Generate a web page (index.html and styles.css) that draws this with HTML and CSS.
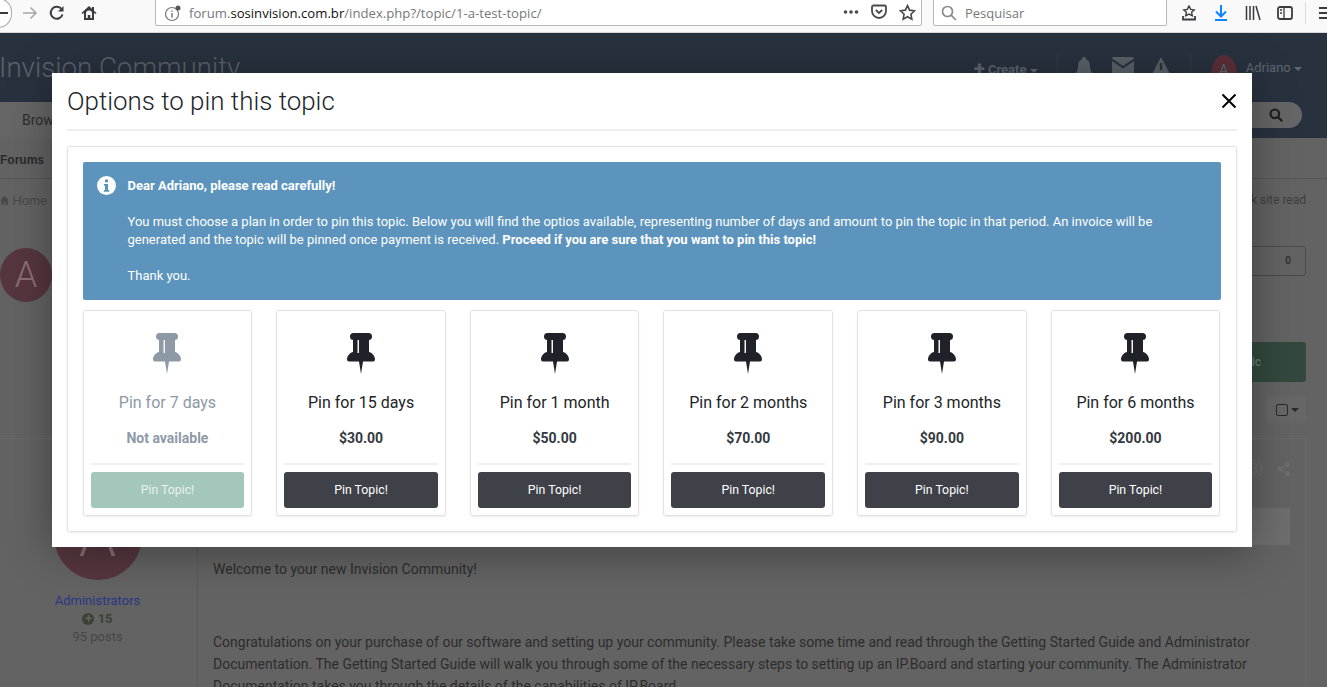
FILE: index.html
```html
<!DOCTYPE html>
<html lang="pt-BR">
<head>
<meta charset="UTF-8">
<title>Options to pin this topic</title>
<link rel="stylesheet" href="styles.css">
</head>
<body>

<header class="toolbar">
    <div class="nav-btns">
        <span class="back-circle"><svg width="10" height="10" viewBox="0 0 10 10"><path d="M1 5h9" stroke="#3b3b3d" stroke-width="2" /></svg></span>
        <svg class="ic-fwd" width="16" height="16" viewBox="0 0 16 16" fill="none" stroke="#a8a8aa" stroke-width="1.6"><path d="M1 8h13M8.5 2.5 14 8l-5.500 5.500" /></svg>
        <svg class="ic-reload" width="16" height="16" viewBox="0 0 16 16" fill="none" stroke="#3b3b3d" stroke-width="2"><path d="M13.500 9.500A6 6 0 1 1 12 3.500" /><path d="M14.500 1v5.500H9" fill="#3b3b3d" stroke="none" /></svg>
        <svg class="ic-home" width="16" height="16" viewBox="0 0 16 16"><path d="M8 1 0.500 8l1 1L3 7.800V15h10V7.800L14.500 9l1-1L13 5.700V2h-2v1.800z" fill="#3b3b3d" /><path d="M5 8.500a3 3 0 0 1 6 0V13H9.300V10H6.700v3H5z" fill="#f9f9fa" /></svg>
    </div>
    <div class="urlbar">
        <svg class="ic-info" width="18" height="18" viewBox="0 0 18 18" fill="none"><circle cx="8" cy="10" r="6.500" stroke="#77777a" stroke-width="1.200" /><path d="M8 9v4.500M8 6.500v1.200" stroke="#77777a" stroke-width="1.500" /><circle cx="14" cy="4" r="2.500" fill="#555" /></svg>
        <span class="url"><span class="url-dim">forum.</span>sosinvision.com.br<span class="url-dim">/index.php?/topic/1-a-test-topic/</span></span>
        <span class="url-tools">
            <svg width="16" height="16" viewBox="0 0 16 16" fill="#4a4a4d"><circle cx="2.500" cy="8" r="1.800" /><circle cx="8" cy="8" r="1.800" /><circle cx="13.500" cy="8" r="1.800" /></svg>
            <svg width="16" height="16" viewBox="0 0 16 16" fill="none" stroke="#4a4a4d" stroke-width="1.800"><path d="M2.500 1.500h11a1.500 1.500 0 0 1 1.500 1.500v4a7 7 0 0 1-14 0V3a1.500 1.500 0 0 1 1-1.500z" /><path d="M4.800 6 8 9l3.200-3" /></svg>
            <svg width="17" height="17" viewBox="0 0 16 16" fill="none" stroke="#4a4a4d" stroke-width="1.500"><path d="M8 1.500l2 4.300 4.600.6-3.400 3.200.9 4.700L8 12l-4.100 2.300.9-4.700L1.400 6.400 6 5.800z" /></svg>
        </span>
    </div>
    <div class="searchbar">
        <svg width="16" height="16" viewBox="0 0 16 16" fill="none" stroke="#8a8a8c" stroke-width="1.700"><circle cx="6.500" cy="6.500" r="5" /><path d="M10.300 10.300 15 15" /></svg>
        <span>Pesquisar</span>
    </div>
    <div class="tool-icons">
        <svg width="16" height="16" viewBox="0 0 16 16" fill="none" stroke="#3b3b3d" stroke-width="1.400"><path d="M8 1l1.700 3.400 3.500.5-2.600 2.400.7 3.500L8 9.100l-3.300 1.700.7-3.500L2.800 4.900l3.500-.5z" /><path d="M2 11v3.500h12V11" stroke-width="1.800" /></svg>
        <svg width="16" height="16" viewBox="0 0 16 16" fill="none" stroke="#0a84ff" stroke-width="2"><path d="M8 0v10.500M3 6.500l5 5 5-5M2 15h12" /></svg>
        <svg width="16" height="16" viewBox="0 0 16 16" fill="none" stroke="#3b3b3d" stroke-width="1.500"><path d="M1.500 1v14M5 1v14M8.500 1v14M11 1l4 14" /></svg>
        <svg width="16" height="16" viewBox="0 0 16 16" fill="none" stroke="#3b3b3d" stroke-width="1.800"><rect x="1" y="2" width="14" height="12" rx="2" /><path d="M7 2v12M3 5h2M3 8h2" stroke-width="1.300" /></svg>
        <i class="tool-sep"></i>
        <svg width="16" height="16" viewBox="0 0 16 16" stroke="#3b3b3d" stroke-width="2"><path d="M1 3h14M1 8h14M1 13h14" /></svg>
    </div>
</header>

<section class="site-head">
    <div class="site-name">Invision Community</div>
    <div class="user-bar">
        <span class="create"><b class="plus">+</b> Create <i class="caret"></i></span>
        <i class="bar-sep"></i>
        <svg class="ic-bell" width="18" height="22" viewBox="0 0 18 22" fill="#5b6168"><path d="M9 0a2 2 0 0 1 2 2.300C14 3.500 15 6 15 9c0 4 1 5.500 3 8H0c2-2.500 3-4 3-8 0-3 1-5.500 4-6.700A2 2 0 0 1 9 0z" /></svg>
        <svg width="22" height="16" viewBox="0 0 22 16" fill="#5b6168"><path d="M0 1.500A1.500 1.500 0 0 1 1.500 0h19A1.500 1.500 0 0 1 22 1.500L11 9z" /><path d="M0 4l11 7.500L22 4v12H0z" /></svg>
        <svg class="ic-warn" width="20" height="19" viewBox="0 0 20 19"><path d="M10 0l10 19H0z" fill="#5b6168" /><path d="M10 6v7" stroke="#29333f" stroke-width="2.500" /></svg>
        <i class="bar-sep"></i>
        <span class="user-pic">A</span>
        <span class="user-name">Adriano <i class="caret"></i></span>
    </div>
</section>

<nav class="main-nav">
    <span class="nav-tab">Browse</span>
    <span class="nav-search">
        <svg width="14" height="14" viewBox="0 0 14 14" fill="none" stroke="#1d1d1f" stroke-width="2.200"><circle cx="5.800" cy="5.800" r="4.300" /><path d="M9 9l4.200 4.200" /></svg>
    </span>
</nav>

<div class="sub-nav">Forums</div>

<main class="page">
    <div class="crumbs">
        <span class="home"><svg width="9" height="9" viewBox="0 0 10 10" fill="#484848"><path d="M5 0 0 5h1.500v5h2.500V7h2v3h2.500V5H10z" /></svg> Home</span>
        <span>Mark site read</span>
    </div>

    <div class="topic-row">
        <span class="topic-pic">A</span>
        <span class="count-box">0</span>
    </div>

    <div class="reply-row"><span class="reply-btn">Reply to this topic</span></div>

    <div class="select-row">
        <span class="select-box"><i class="check"></i><i class="caret caret-dark"></i></span>
    </div>

    <article class="post">
        <aside class="author">
            <span class="author-pic">A</span>
            <a class="group">Administrators</a>
            <span class="rep"><i class="rep-dot">+</i> 15</span>
            <span class="posts">95 posts</span>
        </aside>
        <div class="post-main">
            <div class="post-top">
                <span>(3)</span>
                <svg width="13" height="14" viewBox="0 0 13 14" fill="#6f6f6f" stroke="#6f6f6f"><circle cx="10.500" cy="2.500" r="2" /><circle cx="2.500" cy="7" r="2" /><circle cx="10.500" cy="11.500" r="2" /><path d="M10.500 2.500 2.500 7l8 4.500" fill="none" stroke-width="1.200" /></svg>
            </div>
            <div class="post-strip"></div>
            <div class="post-text">
                <p>Welcome to your new Invision Community!</p>
                <p class="post-gap">Congratulations on your purchase of our software and setting up your community. Please take some time and read through the Getting Started Guide and Administrator<br>Documentation. The Getting Started Guide will walk you through some of the necessary steps to setting up an IP.Board and starting your community. The Administrator<br>Documentation takes you through the details of the capabilities of IP.Board.</p>
            </div>
        </div>
    </article>
</main>

<div class="modal">
    <div class="modal-head">
        <h1>Options to pin this topic</h1>
        <svg class="close" width="16" height="16" viewBox="0 0 16 16" stroke="#000" stroke-width="2" fill="none"><path d="M1.500 1.500l13 13M14.500 1.500l-13 13" /></svg>
    </div>

    <div class="modal-box">
        <div class="alert">
            <svg class="alert-icon" width="19" height="19" viewBox="0 0 19 19"><circle cx="9.500" cy="9.500" r="9.500" fill="#fff" /><path d="M8 3.500h3v2.800H8zM7 8h4v6h1.200v1.800H6.800V14H8v-4.200H7z" fill="#5c94bd" /></svg>
            <div class="alert-text">
                <strong>Dear Adriano, please read carefully!</strong><br><br>
                You must choose a plan in order to pin this topic. Below you will find the optios available, representing number of days and amount to pin the topic in that period. An invoice will be<br>
                generated and the topic will be pinned once payment is received. <strong>Proceed if you are sure that you want to pin this topic!</strong><br><br>
                Thank you.
            </div>
        </div>

        <div class="plans">
            <div class="plan plan-off">
                <svg class="pin" width="28" height="41" viewBox="0 0 28 41"><path d="M6.500 0h15a3.500 3.500 0 0 1 0 7H22v12c2.500 .6 6 3.500 6 7.500a2 2 0 0 1-2 2H16L14 41l-2-12.500H2a2 2 0 0 1-2-2C0 22.500 3.500 19.600 6 19V7h.5a3.500 3.500 0 0 1 0-7z" /><rect class="pin-slit" x="10.500" y="7" width="1.500" height="13" /></svg>
                <div class="plan-name">Pin for 7 days</div>
                <div class="plan-price">Not available</div>
                <hr>
                <a class="pin-btn">Pin Topic!</a>
            </div>
            <div class="plan">
                <svg class="pin" width="28" height="41" viewBox="0 0 28 41"><path d="M6.500 0h15a3.500 3.500 0 0 1 0 7H22v12c2.500 .6 6 3.500 6 7.500a2 2 0 0 1-2 2H16L14 41l-2-12.500H2a2 2 0 0 1-2-2C0 22.500 3.500 19.600 6 19V7h.5a3.500 3.500 0 0 1 0-7z" /><rect class="pin-slit" x="10.500" y="7" width="1.500" height="13" /></svg>
                <div class="plan-name">Pin for 15 days</div>
                <div class="plan-price">$30.00</div>
                <hr>
                <a class="pin-btn">Pin Topic!</a>
            </div>
            <div class="plan">
                <svg class="pin" width="28" height="41" viewBox="0 0 28 41"><path d="M6.500 0h15a3.500 3.500 0 0 1 0 7H22v12c2.500 .6 6 3.500 6 7.500a2 2 0 0 1-2 2H16L14 41l-2-12.500H2a2 2 0 0 1-2-2C0 22.500 3.500 19.600 6 19V7h.5a3.500 3.500 0 0 1 0-7z" /><rect class="pin-slit" x="10.500" y="7" width="1.500" height="13" /></svg>
                <div class="plan-name">Pin for 1 month</div>
                <div class="plan-price">$50.00</div>
                <hr>
                <a class="pin-btn">Pin Topic!</a>
            </div>
            <div class="plan">
                <svg class="pin" width="28" height="41" viewBox="0 0 28 41"><path d="M6.500 0h15a3.500 3.500 0 0 1 0 7H22v12c2.500 .6 6 3.500 6 7.500a2 2 0 0 1-2 2H16L14 41l-2-12.500H2a2 2 0 0 1-2-2C0 22.500 3.500 19.600 6 19V7h.5a3.500 3.500 0 0 1 0-7z" /><rect class="pin-slit" x="10.500" y="7" width="1.500" height="13" /></svg>
                <div class="plan-name">Pin for 2 months</div>
                <div class="plan-price">$70.00</div>
                <hr>
                <a class="pin-btn">Pin Topic!</a>
            </div>
            <div class="plan">
                <svg class="pin" width="28" height="41" viewBox="0 0 28 41"><path d="M6.500 0h15a3.500 3.500 0 0 1 0 7H22v12c2.500 .6 6 3.500 6 7.500a2 2 0 0 1-2 2H16L14 41l-2-12.500H2a2 2 0 0 1-2-2C0 22.500 3.500 19.600 6 19V7h.5a3.500 3.500 0 0 1 0-7z" /><rect class="pin-slit" x="10.500" y="7" width="1.500" height="13" /></svg>
                <div class="plan-name">Pin for 3 months</div>
                <div class="plan-price">$90.00</div>
                <hr>
                <a class="pin-btn">Pin Topic!</a>
            </div>
            <div class="plan">
                <svg class="pin" width="28" height="41" viewBox="0 0 28 41"><path d="M6.500 0h15a3.500 3.500 0 0 1 0 7H22v12c2.500 .6 6 3.500 6 7.500a2 2 0 0 1-2 2H16L14 41l-2-12.500H2a2 2 0 0 1-2-2C0 22.500 3.500 19.600 6 19V7h.5a3.500 3.500 0 0 1 0-7z" /><rect class="pin-slit" x="10.500" y="7" width="1.500" height="13" /></svg>
                <div class="plan-name">Pin for 6 months</div>
                <div class="plan-price">$200.00</div>
                <hr>
                <a class="pin-btn">Pin Topic!</a>
            </div>
        </div>
    </div>
</div>

</body>
</html>
```

FILE: styles.css
```css
* {
    margin: 0;
    box-sizing: border-box;
}

html, body {
    height: 687px;
    overflow: hidden;
}

body {
    position: relative;
    background-color: #636363;
    font-family: Roboto, "Liberation Sans", sans-serif;
    font-size: 14px;
    color: #333;
}

/* browser chrome */
.toolbar {
    display: flex;
    height: 33px;
    background-color: #f9f9fa;
    border-bottom: 1px solid #d8d8da;
    overflow: hidden;
}

.nav-btns {
    display: flex;
    width: 155px;
    height: 26px;
    align-items: center;
    flex-shrink: 0;
}

.back-circle {
    display: flex;
    align-items: center;
    width: 14px;
    height: 30px;
    margin-left: -2px;
    border: 1px solid #a8a8aa;
    border-left: none;
    border-radius: 0 15px 15px 0;
    background-color: #fff;
}

.ic-fwd { margin-left: 10px; }
.ic-reload { margin-left: 11px; }
.ic-home { margin-left: 16px; }

.urlbar, .searchbar {
    display: flex;
    align-items: center;
    flex-shrink: 0;
    height: 27px;
    margin-top: -1px;
    background-color: #fff;
    border: 1px solid #b8b8ba;
    border-radius: 0 0 2px 2px;
    font-family: "Open Sans", sans-serif;
    font-size: 13px;
}

.urlbar {
    width: 767px;
    padding: 0 5px 0 8px;
}

.ic-info { flex-shrink: 0; }

.url {
    margin-left: 7px;
    color: #111;
    flex-grow: 1;
    font-size: 13.150px;
    white-space: nowrap;
}

.url-dim { color: #77777a; }

.url-tools {
    display: flex;
    gap: 12px;
}

.searchbar {
    width: 234px;
    margin-left: 11px;
    padding-left: 7px;
    gap: 8px;
    color: #77777a;
}

.tool-icons {
    display: flex;
    align-items: center;
    gap: 16px;
    height: 26px;
    margin-left: 14px;
    flex-shrink: 0;
}

.tool-sep {
    width: 1px;
    height: 22px;
    margin: 0 -4px;
    background-color: #d8d8da;
}

/* forum page, dimmed by the modal */
.site-head {
    display: flex;
    justify-content: space-between;
    height: 69px;
    padding: 20px 35px 0 0;
    background-color: #28323f;
}

.site-name {
    margin-left: -1px;
    font-size: 27.700px;
    font-weight: 300;
    line-height: 30px;
    color: #5c636c;
}

.user-bar {
    display: flex;
    align-items: flex-start;
    gap: 19px;
    color: #5f666f;
    font-size: 12px;
    font-weight: 500;
    line-height: 30px;
}

.user-bar svg { margin-top: 4px; }

.user-bar .ic-bell { margin-left: -2px; }
.user-bar .ic-warn { margin-left: -2px; }

.create {
    font-size: 13px;
    font-weight: bold;
    white-space: nowrap;
}

.plus {
    font-size: 20px;
    vertical-align: -1px;
}

.caret {
    display: inline-block;
    width: 0;
    height: 0;
    border: 4px solid transparent;
    border-top-color: #5f666f;
    border-bottom: none;
    vertical-align: middle;
}

.bar-sep {
    width: 1px;
    height: 36px;
    background-color: #323c49;
}

.user-pic {
    width: 26px;
    height: 38px;
    margin: 2px -10px 0 1px;
    border-radius: 50%;
    background-color: #5a2f38;
    text-align: center;
    font-size: 15px;
    font-weight: 400;
}

.user-name {
    font-size: 13px;
    font-weight: 400;
    margin-right: -10px;
}

.main-nav {
    display: flex;
    justify-content: space-between;
    height: 36px;
    padding-right: 25px;
    background-color: #28323f;
}

.nav-tab {
    width: 110px;
    padding: 10px 0 0 22px;
    background-color: #666;
    color: #2e2e2e;
    font-size: 14px;
}

.nav-search {
    display: flex;
    align-items: center;
    justify-content: flex-end;
    width: 90px;
    height: 26px;
    padding-right: 19px;
    border-radius: 0 13px 13px 0;
    background-color: #666;
}

.sub-nav {
    height: 41px;
    padding-top: 15px;
    border-bottom: 1px solid #575757;
    font-family: "Liberation Sans", sans-serif;
    font-size: 12px;
    font-weight: bold;
    color: #2a2a2a;
}

.page {
    padding-right: 21px;
}

.crumbs {
    display: flex;
    justify-content: space-between;
    height: 67px;
    padding-top: 14px;
    font-size: 12px;
    color: #3f3f3f;
}

.home {
    font-family: "Liberation Sans", sans-serif;
    font-size: 13px;
    color: #484848;
}

.topic-row {
    display: flex;
    justify-content: space-between;
    height: 96px;
}

.topic-pic {
    width: 52px;
    height: 54px;
    margin-top: 2px;
    border-radius: 50%;
    background-color: #56363f;
    color: #8a6f76;
    text-align: center;
    font-size: 36px;
    font-weight: 300;
    line-height: 54px;
}

.count-box {
    width: 200px;
    height: 30px;
    padding-right: 14px;
    border: 1px solid #4a4a4a;
    border-radius: 3px;
    text-align: right;
    font-size: 10px;
    font-weight: 500;
    line-height: 28px;
    color: #2a2a2a;
}

.reply-row {
    display: flex;
    justify-content: flex-end;
    height: 55px;
}

.reply-btn {
    width: 200px;
    height: 40px;
    padding-right: 45px;
    border-radius: 3px;
    background-color: #33493e;
    color: #64806f;
    text-align: right;
    font-size: 12px;
    font-weight: 500;
    line-height: 40px;
}

.select-row {
    display: flex;
    justify-content: flex-end;
    height: 41px;
}

.select-box {
    display: flex;
    align-items: center;
    gap: 3px;
    width: 40px;
    height: 26px;
    padding-left: 10px;
    border-radius: 3px;
    background-color: #676767;
}

.check {
    width: 12px;
    height: 12px;
    border: 1px solid #2a2a2a;
    border-radius: 2px;
}

.caret-dark { border-top-color: #2a2a2a; }

.post {
    display: flex;
    height: 260px;
    border: 1px solid #6a6a6a;
    border-left: none;
}

.author {
    display: flex;
    flex-direction: column;
    align-items: center;
    width: 198px;
    flex-shrink: 0;
    padding: 53px 0 0 0;
    border-right: 1px solid #5a5a5a;
    font-size: 12px;
    line-height: 18px;
}

.author-pic {
    width: 88px;
    height: 88px;
    margin: 0 2px 12px 0;
    border-radius: 50%;
    background-color: #56363f;
    color: #8a6f76;
    text-align: center;
    font-size: 60px;
    font-weight: 300;
    line-height: 88px;
}

.group {
    margin-right: 2px;
    font-size: 13px;
    color: #2c3786;
}

.rep {
    margin-right: 2px;
    font-weight: bold;
    font-size: 13px;
    color: #3a4434;
}

.rep-dot {
    display: inline-block;
    width: 12px;
    height: 12px;
    border-radius: 50%;
    background-color: #3a4434;
    color: #636363;
    text-align: center;
    font-style: normal;
    font-size: 12px;
    line-height: 12px;
}

.posts {
    margin-right: 2px;
    font-size: 13px;
    color: #474747;
}

.post-main {
    flex-grow: 1;
    min-width: 0;
    padding: 0 15px;
}

.post-top {
    display: flex;
    justify-content: flex-end;
    align-items: center;
    gap: 14px;
    height: 69px;
    padding-bottom: 10px;
    color: #6f6f6f;
}

.post-strip {
    height: 37px;
    margin-right: 0;
    background-color: #6e6e6e;
}

.post-text {
    padding-top: 13px;
    font-size: 14px;
    line-height: 22px;
    color: #2d2d2d;
    white-space: nowrap;
}

.post-gap { margin-top: 51px; }

/* modal */
.modal {
    position: absolute;
    top: 73px;
    left: 52px;
    width: 1200px;
    height: 474px;
    padding: 0 15px;
    background-color: #fff;
    box-shadow: 0 5px 40px rgba(0, 0, 0, 0.35);
}

.modal-head {
    display: flex;
    justify-content: space-between;
    align-items: center;
    height: 58px;
    padding-bottom: 1px;
    border-bottom: 2px solid #eeeeee;
}

.modal-head h1 {
    font-size: 25.900px;
    font-weight: 300;
    color: #212529;
}

.close { margin-right: 0; }

.modal-box {
    height: 386px;
    margin-top: 15px;
    padding: 15px;
    border: 1px solid #e2e2e2;
    border-radius: 3px;
    box-shadow: 0 1px 2px rgba(0, 0, 0, 0.08);
}

.alert {
    display: flex;
    height: 138px;
    padding: 15px 14px 0;
    border-radius: 2px;
    background-color: #5c94bd;
    color: #fff;
    font-size: 13px;
    line-height: 18px;
}

.alert-icon {
    flex-shrink: 0;
    margin: -1px 11.500px 0 0;
}

.alert-text { white-space: nowrap; }

.plans {
    display: grid;
    grid-template-columns: repeat(6, 1fr);
    gap: 24.100px;
    margin: 10px 0.8px 0 -0.3px;
}

.plan {
    height: 206px;
    padding: 22px 7px 7px;
    border: 1px solid #e2e2e2;
    border-radius: 3px;
    box-shadow: 0 1px 2px rgba(0, 0, 0, 0.08);
    text-align: center;
}

.pin {
    display: block;
    margin: 0 auto;
    fill: #1f2329;
}

.pin-slit { fill: #f4f4f4; }

.plan-name {
    margin-top: 17px;
    font-size: 16px;
    line-height: 24px;
    color: #212529;
}

.plan-price {
    margin-top: 13px;
    font-size: 14px;
    font-weight: bold;
    line-height: 20px;
    color: #343a40;
}

.plan hr {
    height: 2px;
    margin: 15px 0 7px;
    border: none;
    background-color: #f0f0f0;
}

.pin-btn {
    display: block;
    height: 36px;
    border-radius: 3px;
    background-color: #3f4149;
    color: #fff;
    font-size: 12.300px;
    line-height: 36px;
}

.plan-off .pin { fill: #8e99a6; }
.plan-off .plan-name { color: #8e99a6; }
.plan-off .plan-price { color: #8e99a6; }
.plan-off .pin-btn {
    background-color: #a4c7bc;
    color: #e8f1ee;
}
```
